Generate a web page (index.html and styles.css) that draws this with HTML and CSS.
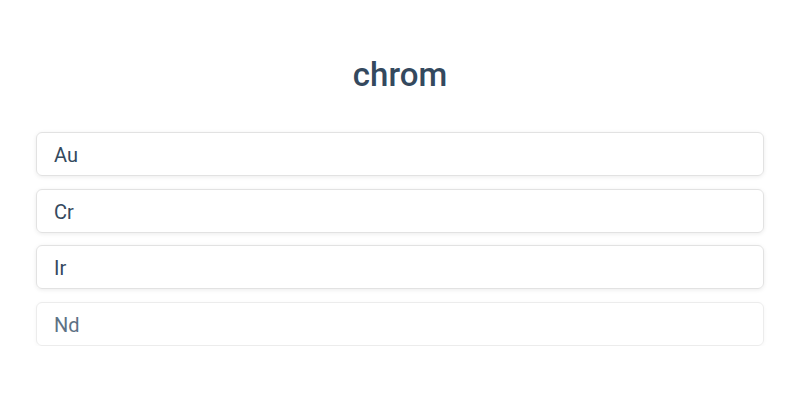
FILE: index.html
```html
<!DOCTYPE html>
<html lang="en">
<head>
    <meta charset="UTF-8">
    <title>chrom</title>
    <link rel="stylesheet" href="styles.css">
</head>
<body>
    <div class="quiz">
        <h1 class="quiz-title">chrom</h1>
        <ul class="answers">
            <li class="answer">Au</li>
            <li class="answer">Cr</li>
            <li class="answer">Ir</li>
            <li class="answer answer-faded">Nd</li>
        </ul>
    </div>
</body>
</html>
```

FILE: styles.css
```css
* {
    margin: 0;
    padding: 0;
    list-style: none;
    box-sizing: border-box;
}
body {
    background: #fff;
    font-family: Roboto, "Liberation Sans", sans-serif;
    color: #2c3e50;
}
.quiz {
    padding: 56px 36px 0;
}
.quiz-title {
    text-align: center;
    font-size: 33px;
    font-weight: 500;
    color: #34495e;
    line-height: 38px;
    margin-bottom: 38px;
}
.answers {
    display: flex;
    flex-direction: column;
    gap: 12.6px;
}
.answer {
    height: 44px;
    line-height: 44px;
    padding: 0 17px;
    font-size: 20px;
    color: #34495e;
    border: 1px solid #e2e2e2;
    border-radius: 6px;
    box-shadow: 0 1px 4px rgba(0,0,0,0.08);
}
.answer-faded {
    color: #5e7285;
    border-color: #ececec;
    box-shadow: 0 1px 4px rgba(0,0,0,0.04);
}
```
